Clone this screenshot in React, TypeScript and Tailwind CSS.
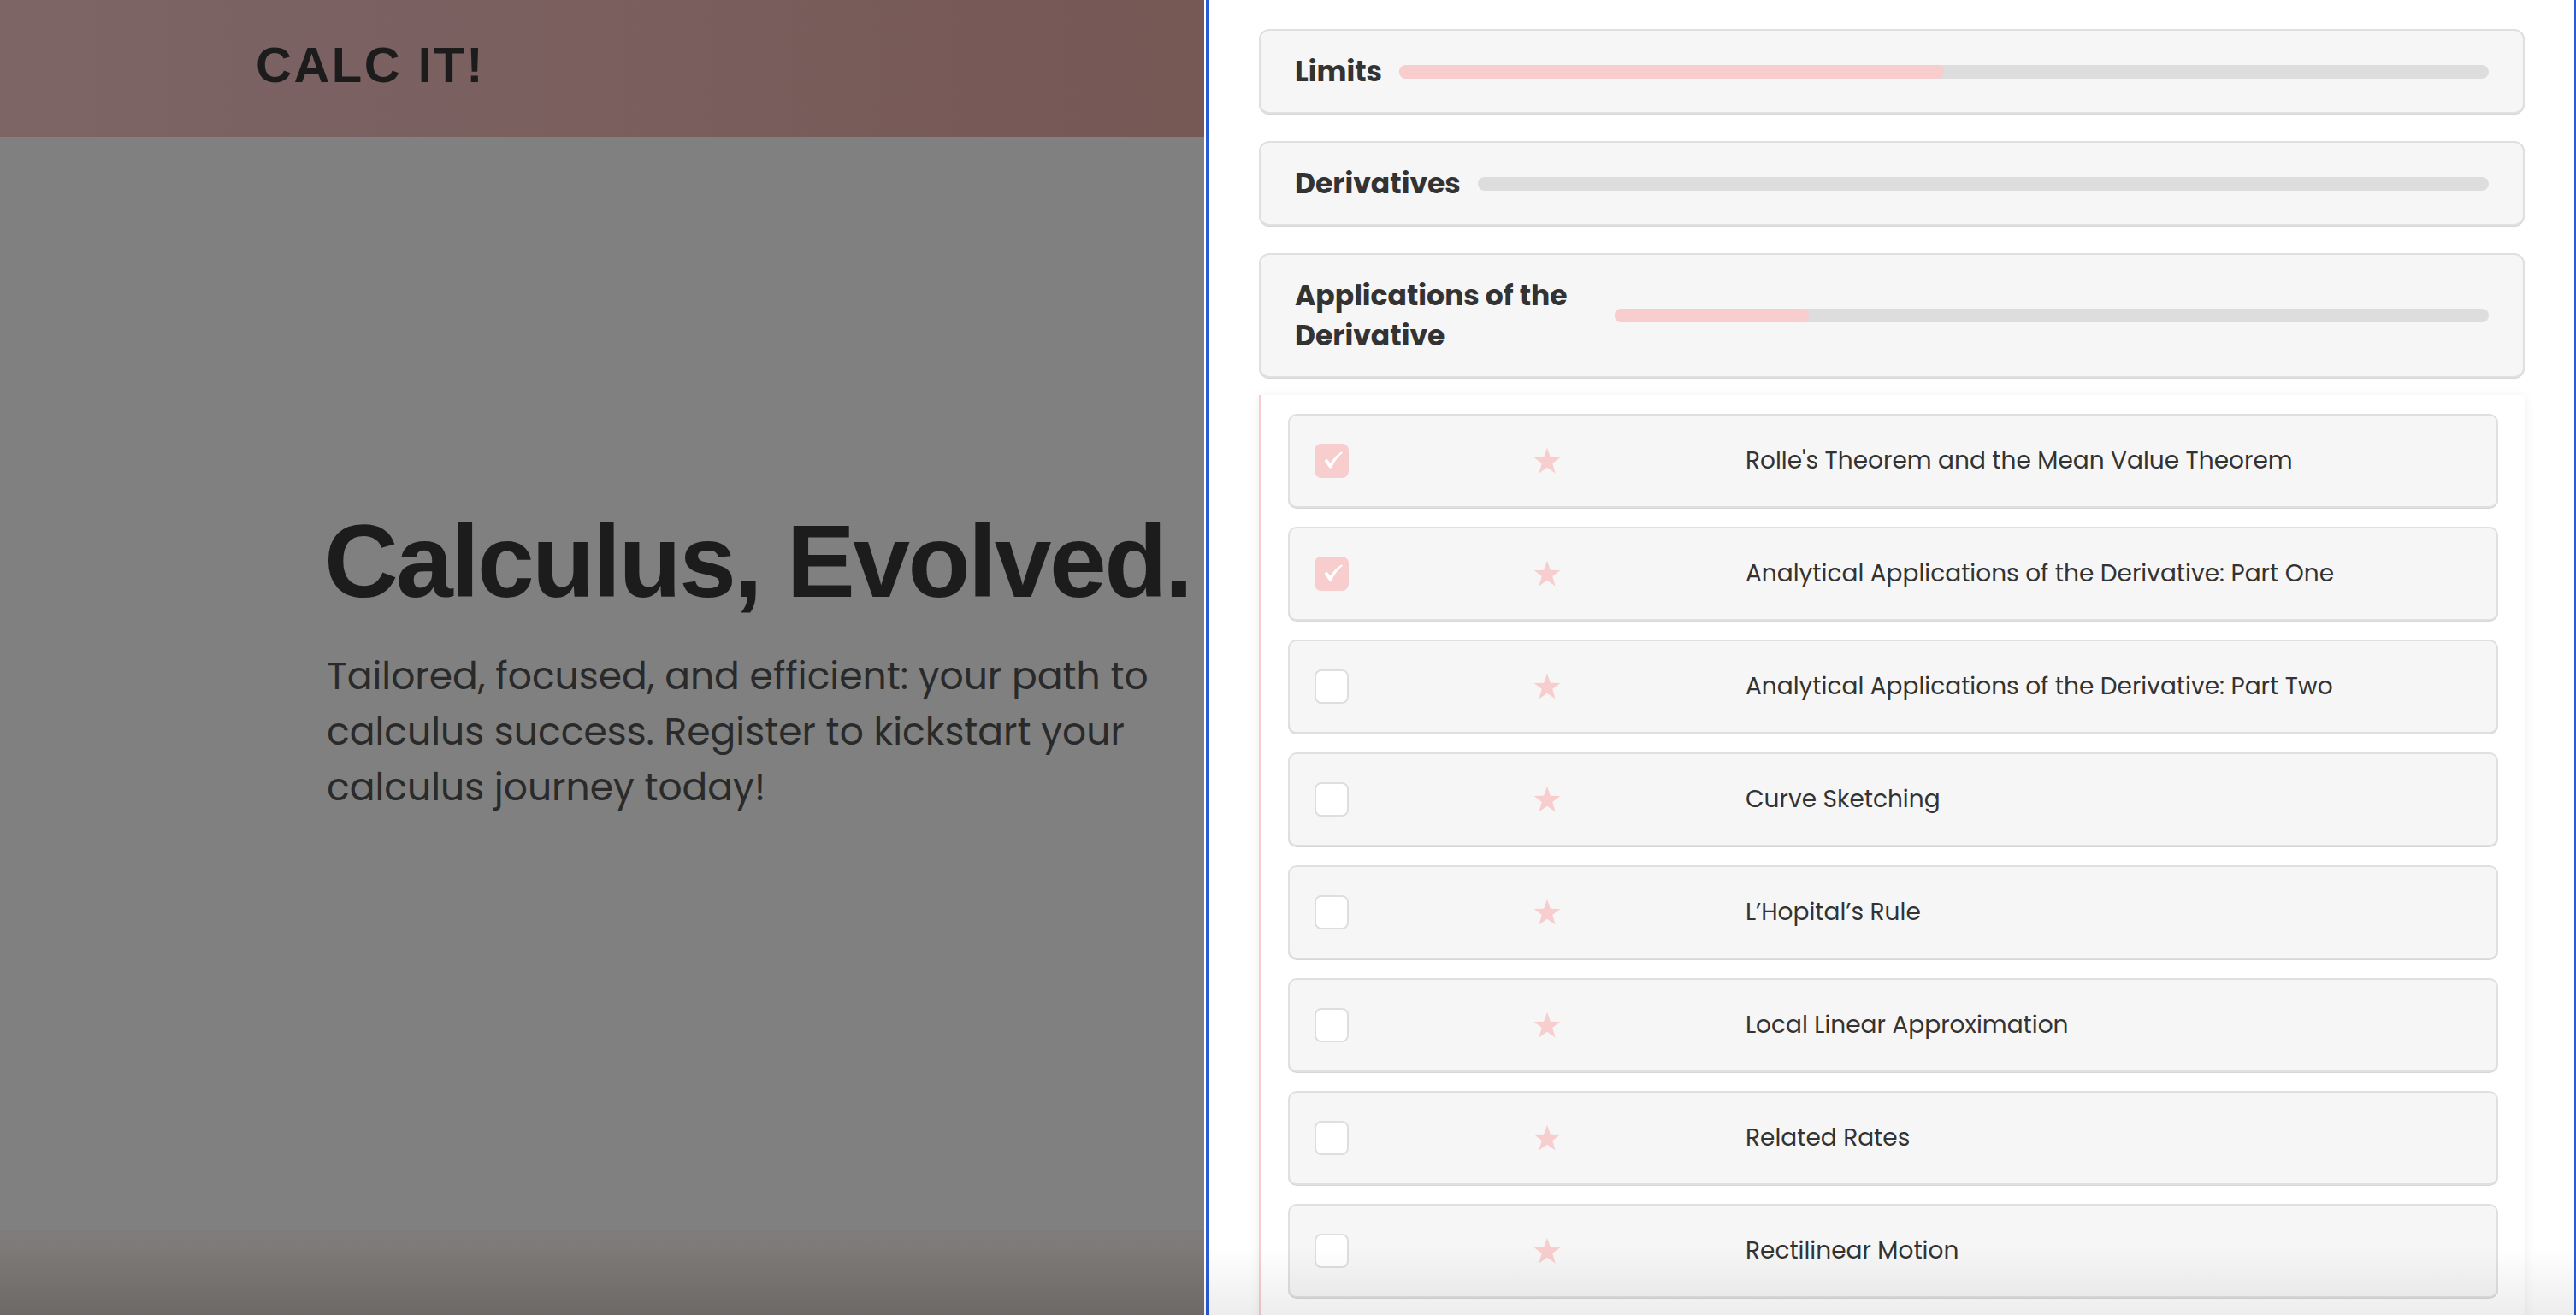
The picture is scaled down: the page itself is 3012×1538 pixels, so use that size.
import React from "react";

type Lesson = {
  title: string;
  done: boolean;
};

type Unit = {
  name: string;
  progress: number;
  lessons?: Lesson[];
};

const units: Unit[] = [
  { name: "Limits", progress: 50 },
  { name: "Derivatives", progress: 0 },
  {
    name: "Applications of the Derivative",
    progress: 22.2,
    lessons: [
      { title: "Rolle's Theorem and the Mean Value Theorem", done: true },
      { title: "Analytical Applications of the Derivative: Part One", done: true },
      { title: "Analytical Applications of the Derivative: Part Two", done: false },
      { title: "Curve Sketching", done: false },
      { title: "L’Hopital’s Rule", done: false },
      { title: "Local Linear Approximation", done: false },
      { title: "Related Rates", done: false },
      { title: "Rectilinear Motion", done: false },
    ],
  },
];

const Star = () => (
  <svg width="34" height="32" viewBox="0 0 24 23" className="shrink-0">
    <polygon
      points="12,0.5 14.8,8.4 23,8.6 16.5,13.6 18.9,22 12,17.1 5.1,22 7.5,13.6 1,8.6 9.2,8.4"
      fill="#f7cdcd"
    />
  </svg>
);

const Check = () => (
  <svg width="24" height="24" viewBox="0 0 24 24">
    <path d="M1.5 13 L4.5 10.8 L8.6 15.6 C12 10 16 5.5 21.8 2.2 L23 3.4 C17 8.5 13 14 9.8 21.5 L7.6 21.5 Z" fill="#ffffff" />
  </svg>
);

const LessonRow = ({ lesson }: { lesson: Lesson }) => {
  return (
    <div className="flex h-[110px] shrink-0 items-center rounded-[10px] border-2 border-[#e0e0e0] bg-[#f6f6f6] pl-[29px] shadow-[0_1px_0_#d6d6d6]">
      {lesson.done ? (
        <div className="flex h-[40px] w-[40px] shrink-0 items-center justify-center rounded-[8px] bg-[#f7cdcd] pb-[3px] pl-[3px]">
          <Check />
        </div>
      ) : (
        <div className="h-[40px] w-[40px] shrink-0 rounded-[8px] border-2 border-[#dedede] bg-white" />
      )}
      <div className="flex w-[464px] shrink-0 justify-center">
        <Star />
      </div>
      <span className="text-[28px] text-[#333333]">{lesson.title}</span>
    </div>
  );
};

const UnitCard = ({ unit }: { unit: Unit }) => {
  return (
    <div className="flex flex-col">
      <div className="flex items-center gap-[20px] rounded-[12px] border-2 border-[#e0e0e0] bg-[#f6f6f6] px-[40px] py-[24px] shadow-[0_1px_0_#d6d6d6]">
        <h3 className="max-w-[354px] shrink-0 text-[33px] leading-[47px] font-bold text-[#333333]">{unit.name}</h3>
        <div className="h-[16px] flex-1 overflow-hidden rounded-full bg-[#dddddd]">
          <div className="h-full rounded-r-full bg-[#f7cdcd]" style={{ width: `${unit.progress}%` }} />
        </div>
      </div>
      {unit.lessons && (
        <div className="mt-[20px] flex flex-col gap-[22px] border-l-[3px] border-[#f7cdcd] bg-white px-[31px] pt-[22px] pb-[30px] shadow-[0_2px_12px_rgba(0,0,0,0.07)]">
          {unit.lessons.map((l) => (
            <LessonRow key={l.title} lesson={l} />
          ))}
        </div>
      )}
    </div>
  );
};

export default function App() {
  return (
    <div
      className="relative flex h-[1538px] w-full overflow-hidden bg-white"
      style={{ fontFamily: '"Poppins", "Open Sans", sans-serif' }}
    >
      {/* dimmed landing page behind the drawer */}
      <div className="flex w-[1408px] shrink-0 flex-col">
        <header className="flex h-[160px] shrink-0 items-center bg-gradient-to-r from-[#7d6566] to-[#765855] pb-[8px] pl-[299px]">
          <span
            className="text-[58px] leading-none font-black tracking-[2.5px] text-[#1c1c1c]"
            style={{ fontFamily: '"Liberation Sans", Arial, sans-serif' }}
          >
            CALC IT!
          </span>
        </header>
        <main className="flex flex-1 flex-col bg-[#808080] pt-[436px] pl-[379px]">
          <h1
            className="text-[120px] leading-none font-bold tracking-[-2.6px] whitespace-nowrap text-[#1c1c1c]"
            style={{ fontFamily: '"Liberation Sans", Arial, sans-serif' }}
          >
            Calculus, Evolved.
          </h1>
          <p className="mt-[42px] w-[1000px] pl-[3px] text-[44px] leading-[65px] text-[#2a2a2a]">
            Tailored, focused, and efficient: your path to calculus success. Register to kickstart your calculus journey today!
          </p>
        </main>
        <footer className="h-[99px] shrink-0 bg-gradient-to-b from-[#807c7b] to-[#75716f]" />
      </div>

      {/* course drawer */}
      <aside className="flex-1 bg-white pl-[2px]">
        <div className="flex h-full flex-col gap-[32px] border-r-2 border-l-4 border-[#2c5cd5] px-[58px] pt-[34px]">
          {units.map((u) => (
            <UnitCard key={u.name} unit={u} />
          ))}
        </div>
      </aside>

      <div className="pointer-events-none absolute inset-x-0 bottom-0 h-[80px] bg-gradient-to-t from-black/[0.07] to-transparent" />
    </div>
  );
}
